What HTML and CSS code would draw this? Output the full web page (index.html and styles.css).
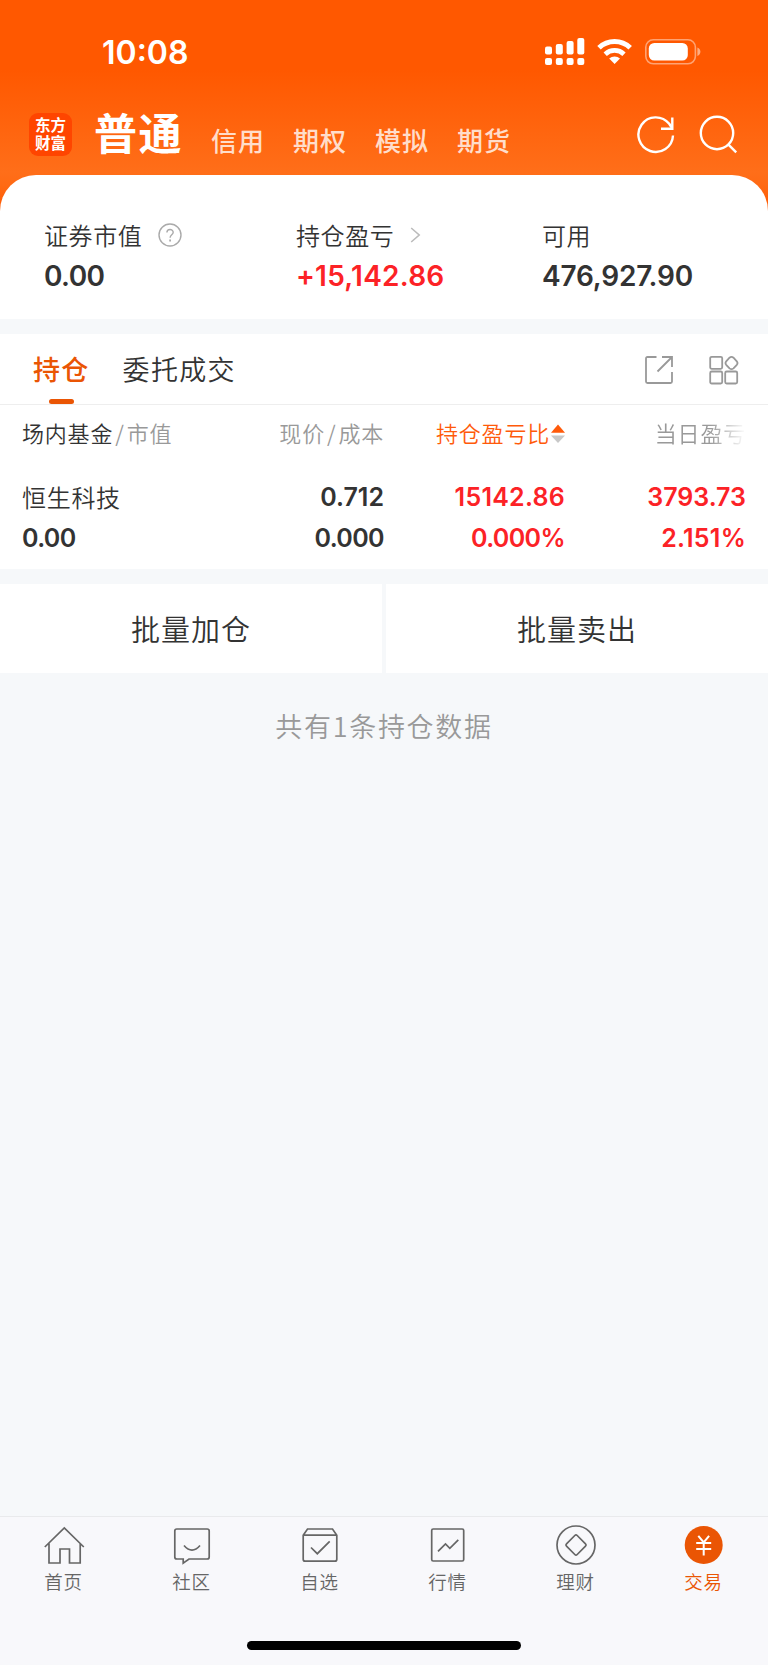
FILE: index.html
```html
<!DOCTYPE html>
<html lang="zh-CN">
<head>
    <meta charset="UTF-8">
    <meta name="viewport" content="width=device-width, initial-scale=1.0">
    <title>交易 - 普通</title>
    <link rel="stylesheet" href="styles.css">
</head>
<body>
    <header class="header">
        <div class="status-bar">
            <span class="time">10:08</span>
            <svg class="signal" width="40" height="28" viewBox="0 0 40 28" fill="#fff">
                <rect x="0" y="8.5" width="7" height="8" rx="2"/>
                <rect x="10.8" y="6" width="7" height="10.5" rx="2"/>
                <rect x="21.6" y="3" width="7" height="13.5" rx="2"/>
                <rect x="32.3" y="0" width="7" height="16.5" rx="2"/>
                <rect x="0" y="20" width="7" height="7" rx="2"/>
                <rect x="10.8" y="20" width="7" height="7" rx="2"/>
                <rect x="21.6" y="20" width="7" height="7" rx="2"/>
                <rect x="32.3" y="20" width="7" height="7" rx="2"/>
            </svg>
            <svg class="wifi" width="36" height="26" viewBox="0 0 36 26">
                <path d="M2 8.8a22.6 22.6 0 0 1 31.2 0" fill="none" stroke="#fff" stroke-width="5"/>
                <path d="M8.2 15.2a13.7 13.7 0 0 1 18.8 0" fill="none" stroke="#fff" stroke-width="4.8"/>
                <path d="M12.2 19.6a7.8 7.8 0 0 1 10.8 0L17.6 25z" fill="#fff"/>
            </svg>
            <svg class="battery" width="56" height="26" viewBox="0 0 56 26">
                <rect x="0.8" y="0.8" width="49.6" height="24" rx="7.5" fill="none" stroke="#fff" stroke-opacity=".45" stroke-width="1.6"/>
                <rect x="3.8" y="4" width="39" height="17.5" rx="5.5" fill="#fff"/>
                <path d="M52.4 8.5c4 1.6 4 7 0 8.6z" fill="#fff" fill-opacity=".5"/>
            </svg>
        </div>
        <nav class="account-nav">
            <div class="logo"><span>东方</span><span>财富</span></div>
            <span class="account active">普通</span>
            <span class="account">信用</span>
            <span class="account">期权</span>
            <span class="account">模拟</span>
            <span class="account">期货</span>
            <svg class="icon-refresh" width="40" height="40" viewBox="0 0 40 40" fill="none" stroke="#fff" stroke-width="2.4">
                <path d="M37 20.5A17.3 17.3 0 1 1 33.2 8.8L36 13"/>
                <path d="M36.3 2.5v11.3H25"/>
            </svg>
            <svg class="icon-search" width="40" height="40" viewBox="0 0 40 40" fill="none" stroke="#fff" stroke-width="2.4">
                <circle cx="18" cy="18" r="16.2"/>
                <path d="M29 29.2l8.2 8.2"/>
            </svg>
        </nav>
    </header>

    <section class="summary">
        <div class="summary-item">
            <div class="label">证券市值
                <svg class="icon-help" width="24" height="24" viewBox="0 0 24 24" fill="none" stroke="#aaa" stroke-width="1.4">
                    <circle cx="12" cy="12" r="11"/>
                    <path d="M8.9 9.6c0-4.2 6.3-4 6.3-.3 0 2.5-3.1 2.6-3.1 5.4"/>
                    <path d="M12.1 16.5v1.9" stroke-width="1.8"/>
                </svg>
            </div>
            <div class="value tight">0.00</div>
        </div>
        <div class="summary-item">
            <div class="label">持仓盈亏
                <svg class="icon-arrow" width="12" height="16" viewBox="0 0 12 16" fill="none" stroke="#bbb" stroke-width="1.6">
                    <path d="M1.2 1l8 7-8 7"/>
                </svg>
            </div>
            <div class="value up wide">+15,142.86</div>
        </div>
        <div class="summary-item">
            <div class="label">可用</div>
            <div class="value">476,927.90</div>
        </div>
    </section>

    <section class="position">
        <div class="tabs">
            <span class="tab active">持仓</span>
            <span class="tab">委托成交</span>
            <svg class="icon-share" width="28" height="28" viewBox="0 0 28 28" fill="none" stroke="#999" stroke-width="1.8">
                <path d="M11.5 1H2.5Q1 1 1 2.5v23Q1 27 2.5 27h23q1.5 0 1.5-1.5V16"/>
                <path d="M17 1h10v10M27 1L12.5 15.5"/>
            </svg>
            <svg class="icon-grid" width="30" height="30" viewBox="0 0 30 30" fill="none" stroke="#999" stroke-width="1.8">
                <rect x="1.2" y="1.8" width="12" height="12" rx="1.5"/>
                <rect x="1.2" y="16.5" width="12" height="12" rx="1.5"/>
                <rect x="16.2" y="16.5" width="12" height="12" rx="1.5"/>
                <path d="M20.5 2.7q2-1.6 4 0l3.3 3.7q1.4 1.7 0 3.4l-3.3 3.6q-2 1.5-4 0l-3.3-3.6q-1.4-1.7 0-3.4z"/>
            </svg>
        </div>
        <div class="list-row list-head">
            <div class="cell"><span class="dark">场内基金</span><i>/</i>市值</div>
            <div class="cell">现价<i>/</i>成本</div>
            <div class="cell sorted">持仓盈亏比<svg class="icon-sort" width="14" height="20" viewBox="0 0 14 20">
                    <path d="M7 0.5L14 8.7H0z" fill="#ff5a0a"/>
                    <path d="M7 19L14 11.5H0z" fill="#c8c8c8"/>
                </svg>
            </div>
            <div class="cell fade">当日盈亏</div>
        </div>
        <div class="list-row">
            <div class="cell name">恒生科技</div>
            <div class="cell">0.712</div>
            <div class="cell up wide">15142.86</div>
            <div class="cell up">3793.73</div>
        </div>
        <div class="list-row">
            <div class="cell tight">0.00</div>
            <div class="cell tight">0.000</div>
            <div class="cell up tight">0.000%</div>
            <div class="cell up wide">2.151%</div>
        </div>
    </section>

    <section class="batch">
        <div class="batch-btn">批量加仓</div>
        <div class="batch-btn">批量卖出</div>
    </section>
    <p class="count">共有1条持仓数据</p>

    <footer class="tabbar">
        <nav class="menu">
            <div class="menu-item">
                <svg width="42" height="42" viewBox="0 0 42 42">
                    <path d="M1.8 22L21.3 3l19.5 19M6 18.5V38h11V24h9.5v14h10.7V18.5"/>
                </svg>
                <span>首页</span>
            </div>
            <div class="menu-item">
                <svg width="42" height="42" viewBox="0 0 42 42">
                    <path d="M5.8 4h30.4q2 0 2 2v26q0 2-2 2H18l-5.8 4.2V34H5.8q-2 0-2-2V6q0-2 2-2z"/>
                    <path d="M13 20.5q8 9.2 16 0"/>
                </svg>
                <span>社区</span>
            </div>
            <div class="menu-item">
                <svg width="42" height="42" viewBox="0 0 42 42">
                    <path d="M4.2 10.2L8.5 4h25l4.300 6.200v24q0 2-2 2H6.200q-2 0-2-2zM4.200 10.200h33.600M12 22.500l6.300 6.200L30.700 16.300"/>
                </svg>
                <span>自选</span>
            </div>
            <div class="menu-item">
                <svg width="42" height="42" viewBox="0 0 42 42">
                    <rect x="4.700" y="4" width="32" height="32" rx="1.500"/>
                    <path d="M11 26.300l7.500-7.400 4.300 4.400 8.500-8.500"/>
                </svg>
                <span>行情</span>
            </div>
            <div class="menu-item">
                <svg width="42" height="42" viewBox="0 0 42 42">
                    <circle cx="21" cy="20" r="19"/>
                    <path d="M19.800 10.500q1.200-1.200 2.400 0l8.300 8.300q1.200 1.200 0 2.400l-8.300 8.300q-1.200 1.200-2.400 0l-8.300-8.300q-1.200-1.200 0-2.400z"/>
                </svg>
                <span>理财</span>
            </div>
            <div class="menu-item active">
                <svg width="42" height="42" viewBox="0 0 42 42">
                    <circle class="coin" cx="20.700" cy="20" r="19"/>
                    <path class="yen" d="M15.300 10.800l5.400 6.700 5.400-6.700M20.700 17.500v13M13.200 18h15M13.200 24h15"/>
                </svg>
                <span>交易</span>
            </div>
        </nav>
        <div class="home-indicator"></div>
    </footer>
</body>
</html>
```
FILE: styles.css
```css
* {
    box-sizing: border-box;
}

body {
    display: flex;
    flex-direction: column;
    height: 1665px;
    margin: 0;
    background: #f6f8fa;
    color: #333;
    font-family: "Noto Sans CJK SC", sans-serif;
    font-weight: 350;
}

svg {
    flex: none;
    display: block;
}

.header {
    height: 215px;
    background: linear-gradient(#ff5800 70px, #ff6e19 172px, #ff6a14 185px, #ff5800 213px);
    color: #fff;
}

.status-bar {
    display: flex;
    height: 100px;
    padding: 38px 67px 0 102px;
}

.time {
    flex: 1;
    font: 600 32px/30px Inter, sans-serif;
}

.wifi {
    margin: 1px 0 0 12px;
}

.battery {
    margin: 1px 0 0 12px;
}

.account-nav {
    display: flex;
    padding: 0 30px 0 29px;
}

.logo {
    display: flex;
    flex-direction: column;
    width: 43px;
    height: 43px;
    margin: 13px 22px 0 0;
    padding-top: 2px;
    border-radius: 9px;
    background: #ff4500;
    font-size: 15.5px;
    font-weight: 700;
    line-height: 18px;
    text-align: center;
}

.account {
    margin: 21px 28px 0 0;
    color: rgba(255, 255, 255, .8);
    font-size: 26px;
    font-weight: 500;
    line-height: 38px;
    letter-spacing: 1px;
}

.account.active {
    margin: 6px 28px 0 0;
    color: #fff;
    font-size: 43px;
    font-weight: 700;
    line-height: 50px;
    letter-spacing: 1.5px;
}

.icon-refresh {
    margin: 15px 23px 0 auto;
}

.icon-search {
    margin: 15px -1px 0 0;
}

.summary {
    display: grid;
    grid-template-columns: 252px 246px 1fr;
    height: 144px;
    margin-top: -40px;
    padding: 41px 0 0 44px;
    border-radius: 36px 36px 0 0;
    background: #fff;
}

.label {
    display: flex;
    align-items: center;
    height: 36px;
    font-size: 24px;
    letter-spacing: .6px;
}

.icon-help {
    margin: 1px 0 0 16px;
}

.icon-arrow {
    margin: 1px 0 0 16px;
}

.value {
    font: 600 28px/48px Inter, sans-serif;
    letter-spacing: -.2px;
}

.up {
    color: #fc2226;
}

.position {
    height: 235px;
    margin-top: 15px;
    background: #fff;
}

.tabs {
    display: flex;
    height: 71px;
    padding: 0 29px 0 33px;
    border-bottom: 1px solid #eee;
}

.tab {
    margin-right: 33px;
    font-size: 27px;
    line-height: 69px;
    letter-spacing: 1.3px;
}

.tab.active {
    display: flex;
    flex-direction: column;
    align-items: center;
    color: #ea5504;
    font-weight: 500;
}

.tab.active::after {
    content: "";
    width: 25px;
    height: 5px;
    margin-top: -4px;
    border-radius: 3px;
    background: #ea5504;
}

.icon-share {
    margin: 22px 36px 0 auto;
}

.icon-grid {
    margin-top: 21px;
}

.list-row {
    display: grid;
    grid-template-columns: 181px 181px 181px 181px;
    padding-left: 22px;
    font: 600 25px/40.5px Inter, sans-serif;
}

.cell {
    text-align: right;
    white-space: nowrap;
}

.cell:first-child {
    text-align: left;
}

.tight {
    letter-spacing: -.6px;
}

.wide {
    letter-spacing: .25px;
}

.list-head {
    height: 72px;
    color: #999;
    font: 350 22px/55px "Noto Sans CJK SC", sans-serif;
    letter-spacing: .8px;
}

.list-head i {
    margin: 0 2px;
    font-style: normal;
}

.dark {
    color: #333;
}

.sorted {
    display: flex;
    justify-content: flex-end;
    color: #ff5a0a;
}

.icon-sort {
    margin: 19px 0 0 1px;
}

.fade {
    -webkit-mask-image: linear-gradient(to right, #000 80%, transparent);
    mask-image: linear-gradient(to right, #000 80%, transparent);
}

.cell.name {
    font: 350 24px/40.5px "Noto Sans CJK SC", sans-serif;
    letter-spacing: .7px;
}

.batch {
    display: grid;
    grid-template-columns: 1fr 1fr;
    gap: 4px;
    height: 89px;
    margin-top: 15px;
}

.batch-btn {
    background: #fff;
    font-size: 29px;
    line-height: 88px;
    letter-spacing: 1px;
    text-align: center;
}

.count {
    margin: 33px 0 0;
    color: #999;
    font-size: 27px;
    line-height: 40px;
    letter-spacing: 1.7px;
    text-align: center;
}

.tabbar {
    height: 149px;
    margin-top: auto;
    border-top: 1px solid #e9eaec;
    background: #f8f8fb;
}

.menu {
    display: flex;
    height: 124px;
}

.menu-item {
    flex: 1;
    display: flex;
    flex-direction: column;
    align-items: center;
    padding-top: 8px;
    color: #666;
    font-size: 18.5px;
    line-height: 28px;
    letter-spacing: .8px;
}

.menu-item span {
    margin-right: 1px;
}

.menu-item svg {
    fill: none;
    stroke: #666;
    stroke-width: 1.7;
}

.menu-item.active {
    color: #ea5504;
}

.menu-item .coin {
    fill: #ea5504;
    stroke: none;
}

.menu-item .yen {
    stroke: #fff;
    stroke-width: 2;
}

.home-indicator {
    width: 274px;
    height: 9px;
    margin: 0 auto;
    border-radius: 5px;
    background: #000;
}
```
